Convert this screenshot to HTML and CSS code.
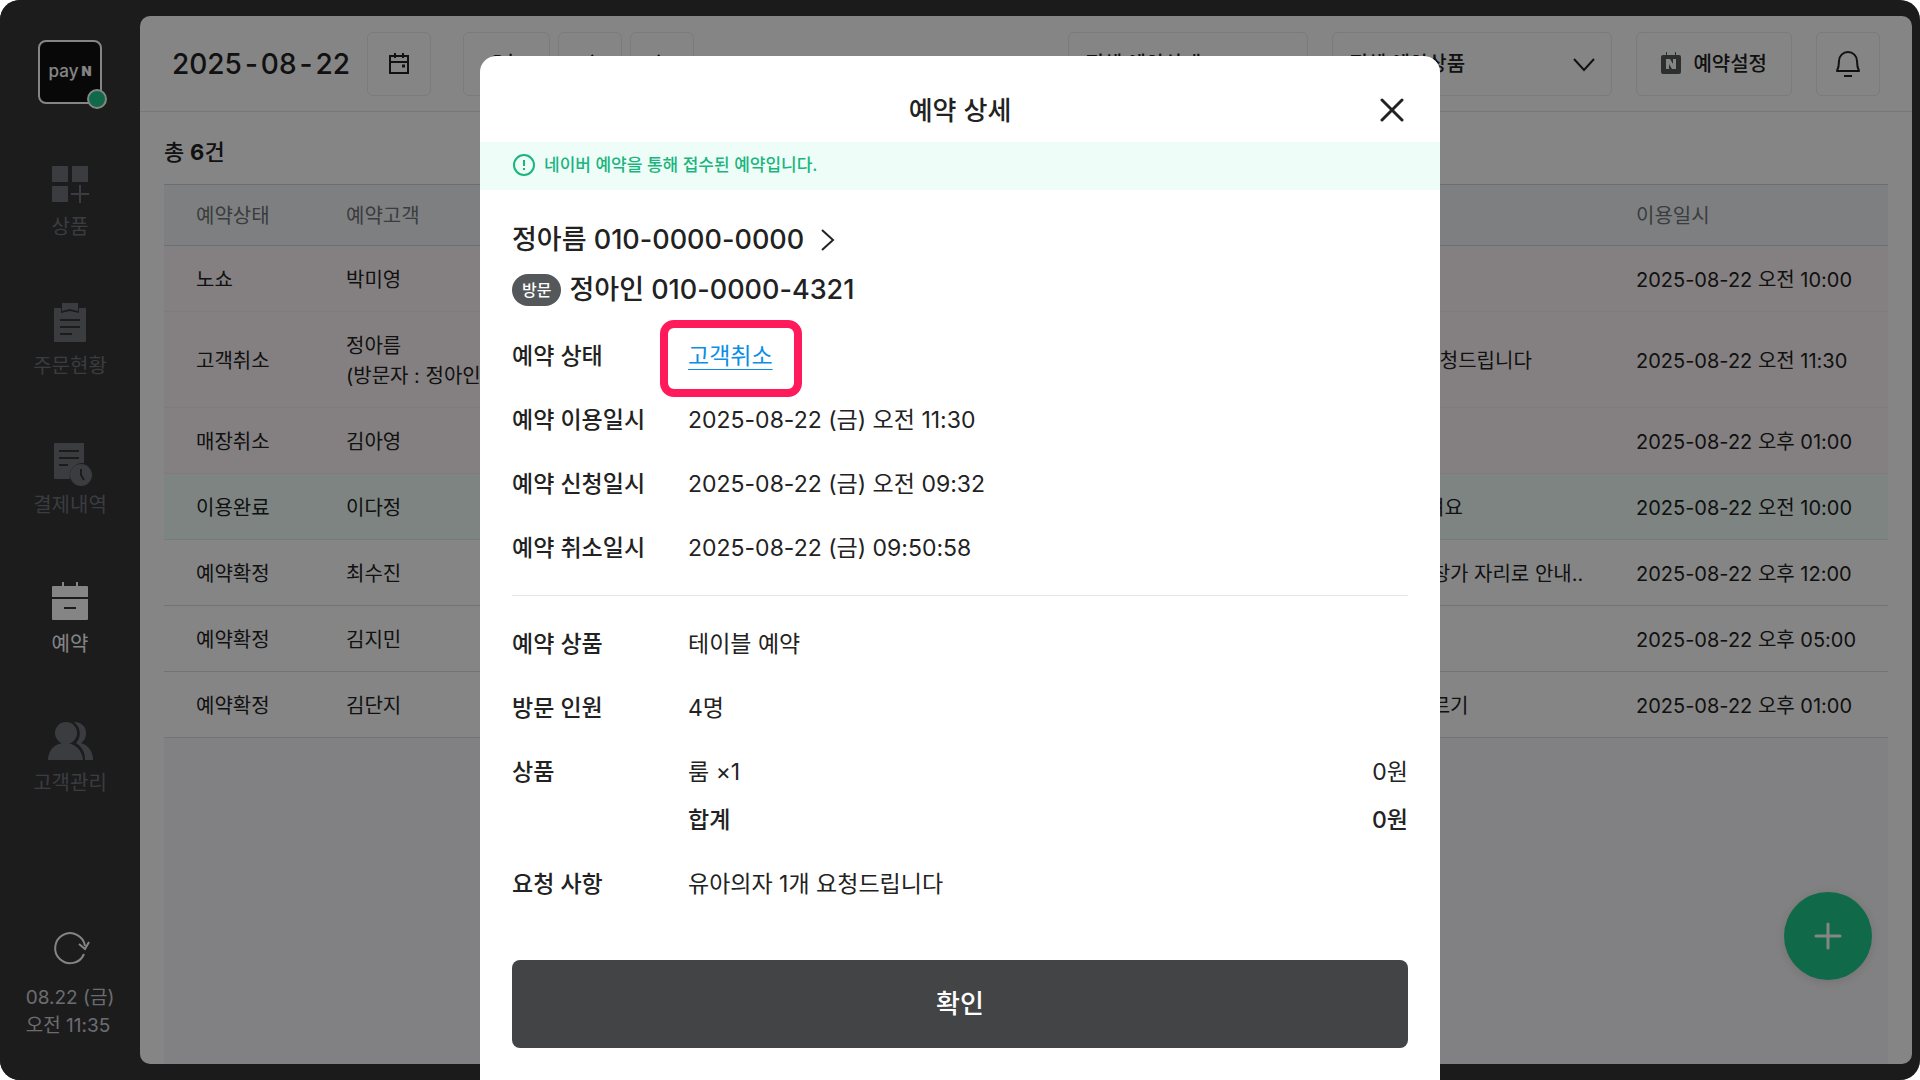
FILE: index.html
```html
<!DOCTYPE html>
<html lang="ko">
<head>
  <meta charset="UTF-8">
  <meta name="viewport" content="width=device-width, initial-scale=1.0">
  <link rel="stylesheet" href="styles.css">
  <title>예약 상세</title>
</head>
<body>
  <div class="app">
    <aside class="sidebar">
      <div class="logo">
        <span class="logo-pay">pay</span><span class="logo-n">N</span>
        <span class="logo-status"></span>
      </div>

      <nav class="menu">
        <a class="menu-item" href="#">
          <svg width="48" height="48" viewBox="0 0 48 48" fill="currentColor">
            <rect x="6" y="6" width="16" height="16" rx="1"/>
            <rect x="26" y="6" width="16" height="16" rx="1"/>
            <rect x="6" y="26" width="16" height="16" rx="1"/>
            <path d="M33 25h2v8h8v2h-8v8h-2v-8h-8v-2h8z"/>
          </svg>
          <span>상품</span>
        </a>
        <a class="menu-item" href="#">
          <svg width="48" height="48" viewBox="0 0 48 48">
            <path fill="currentColor" d="M9 9h6v5l9-2 9 2V9h6a1 1 0 0 1 1 1v32a1 1 0 0 1-1 1H9a1 1 0 0 1-1-1V10a1 1 0 0 1 1-1z"/>
            <path fill="currentColor" d="M16 4h16v8l-8-2-8 2z"/>
            <path class="cut" d="M14 21h20M14 28h20M14 35h12"/>
          </svg>
          <span>주문현황</span>
        </a>
        <a class="menu-item" href="#">
          <svg width="48" height="48" viewBox="0 0 48 48">
            <path fill="currentColor" d="M9 5h28a1 1 0 0 1 1 1v19a13 13 0 0 0-14 16H9a1 1 0 0 1-1-1V6a1 1 0 0 1 1-1z"/>
            <path class="cut" d="M13 13h20M13 20h20M13 27h9"/>
            <circle cx="35" cy="37" r="11" fill="currentColor"/>
            <path class="cut" d="M35 31v6l3 5"/>
          </svg>
          <span>결제내역</span>
        </a>
        <a class="menu-item active" href="#">
          <svg width="48" height="48" viewBox="0 0 48 48">
            <path fill="currentColor" d="M16 5h2v4h12V5h2v4h9a1 1 0 0 1 1 1v10H6V10a1 1 0 0 1 1-1h9z"/>
            <path fill="currentColor" d="M6 22h36v20a1 1 0 0 1-1 1H7a1 1 0 0 1-1-1z"/>
            <path class="cut" d="M18 31h12"/>
          </svg>
          <span>예약</span>
        </a>
        <a class="menu-item" href="#">
          <svg width="48" height="48" viewBox="0 0 48 48" fill="currentColor">
            <circle cx="20" cy="17" r="11"/>
            <path d="M2 44c0-10 7-17 17-17s17 7 18 17z"/>
            <path d="M28 6c7 0 12 4 12 11 0 5-2 8-5 10 7 2 12 8 12 17h-8c0-8-3-13-9-17 5-5 6-15-2-21z"/>
          </svg>
          <span>고객관리</span>
        </a>
      </nav>

      <div class="sync">
        <button class="icon-button" type="button" aria-label="새로고침">
          <svg width="40" height="40" viewBox="0 0 40 40" fill="none" stroke="currentColor" stroke-width="2">
            <path d="M34 26a15 15 0 1 1 1-8"/>
            <path d="M29 16l6 5 4-7"/>
          </svg>
        </button>
        <p class="clock">08.22 (금)<br>오전 11:35</p>
      </div>
    </aside>

    <main class="panel">
      <header class="toolbar">
        <h1 class="date"><span>2025</span><span>-</span><span>08</span><span>-</span><span>22</span></h1>
        <button class="box square" type="button" aria-label="날짜 선택">
          <svg width="24" height="24" viewBox="0 0 24 24" fill="none" stroke="currentColor" stroke-width="2">
            <path d="M3 4h18v17H3zM3 10h18M8 1v5M16 1v5"/>
            <path d="M15 14h3" stroke-width="3"/>
          </svg>
        </button>
        <div class="date-nav">
          <button class="box today" type="button">오늘</button>
          <button class="box square" type="button" aria-label="이전">
            <svg width="24" height="24" viewBox="0 0 24 24" fill="none" stroke="currentColor" stroke-width="2"><path d="M15 3l-8 9 8 9"/></svg>
          </button>
          <button class="box square" type="button" aria-label="다음">
            <svg width="24" height="24" viewBox="0 0 24 24" fill="none" stroke="currentColor" stroke-width="2"><path d="M8 3l8 9-8 9"/></svg>
          </button>
        </div>
        <div class="filters">
          <div class="select-wrap status">
            <select class="box" aria-label="예약상태"><option>전체 예약상태</option></select>
            <svg class="caret" width="24" height="24" viewBox="0 0 24 24" fill="none" stroke="currentColor" stroke-width="2"><path d="M2 7l10 11L22 7"/></svg>
          </div>
          <div class="select-wrap product">
            <select class="box" aria-label="예약상품"><option>전체 예약상품</option></select>
            <svg class="caret" width="24" height="24" viewBox="0 0 24 24" fill="none" stroke="currentColor" stroke-width="2"><path d="M2 7l10 11L22 7"/></svg>
          </div>
          <button class="box setting" type="button">
            <svg width="20" height="24" viewBox="0 0 20 24">
              <path fill="#555b58" d="M2 3h3V0h1v3h8V0h1v3h3a2 2 0 0 1 2 2v15a2 2 0 0 1-2 2H2a2 2 0 0 1-2-2V5a2 2 0 0 1 2-2z"/>
              <path fill="#fff" d="M5 7h4l3 5V7h3v10h-4l-3-5v5H5z"/>
            </svg>
            예약설정
          </button>
          <button class="box square" type="button" aria-label="알림">
            <svg width="28" height="32" viewBox="0 0 28 32" fill="none" stroke="currentColor" stroke-width="2">
              <path d="M3 23c2-4 2-7 2-10a9 9 0 0 1 18 0c0 3 0 6 2 10z" stroke-linejoin="round"/>
              <path d="M10 28h8"/>
            </svg>
          </button>
        </div>
      </header>

      <section class="list">
        <p class="total">총 <b>6</b>건</p>
        <div class="table-wrap">
          <table class="reservations">
            <colgroup>
              <col class="col-status"><col class="col-name"><col><col class="col-request"><col class="col-time">
            </colgroup>
            <thead>
              <tr><th>예약상태</th><th>예약고객</th><th>예약상품</th><th>요청사항</th><th>이용일시</th></tr>
            </thead>
            <tbody>
              <tr class="canceled"><td>노쇼</td><td>박미영</td><td></td><td></td><td>2025-08-22 오전 10:00</td></tr>
              <tr class="canceled tall"><td>고객취소</td><td>정아름<br>(방문자 : 정아인)</td><td></td><td>유아의자 1개 요청드립니다</td><td>2025-08-22 오전 11:30</td></tr>
              <tr class="canceled"><td>매장취소</td><td>김아영</td><td></td><td></td><td>2025-08-22 오후 01:00</td></tr>
              <tr class="done"><td>이용완료</td><td>이다정</td><td></td><td>창가석 부탁드려요</td><td>2025-08-22 오전 10:00</td></tr>
              <tr><td>예약확정</td><td>최수진</td><td></td><td>가능하시면 꼭 창가 자리로 안내..</td><td>2025-08-22 오후 12:00</td></tr>
              <tr><td>예약확정</td><td>김지민</td><td></td><td></td><td>2025-08-22 오후 05:00</td></tr>
              <tr><td>예약확정</td><td>김단지</td><td></td><td>아이 땅콩 알레르기</td><td>2025-08-22 오후 01:00</td></tr>
            </tbody>
          </table>
        </div>
      </section>

      <button class="fab" type="button" aria-label="예약 추가">
        <svg width="28" height="28" viewBox="0 0 28 28" fill="none" stroke="currentColor" stroke-width="3" stroke-linecap="round"><path d="M14 2v24M2 14h24"/></svg>
      </button>
    </main>

    <div class="dim">
      <div class="modal" role="dialog" aria-labelledby="modalTitle">
        <div class="modal-head">
          <h2 id="modalTitle">예약 상세</h2>
          <button class="icon-button close" type="button" aria-label="닫기">
            <svg width="24" height="24" viewBox="0 0 24 24" fill="none" stroke="currentColor" stroke-width="3" stroke-linecap="round"><path d="M2 2l20 20M22 2L2 22"/></svg>
          </button>
        </div>
        <p class="notice">
          <svg width="24" height="24" viewBox="0 0 24 24" fill="none" stroke="currentColor" stroke-width="2"><circle cx="12" cy="12" r="10"/><path d="M12 7v6M12 15v2"/></svg>
          네이버 예약을 통해 접수된 예약입니다.
        </p>

        <div class="modal-body">
          <a class="person" href="#">정아름 010-0000-0000
            <svg width="16" height="24" viewBox="0 0 16 24" fill="none" stroke="currentColor" stroke-width="2"><path d="M2 2l11 10L2 22"/></svg>
          </a>
          <p class="person visitor"><span class="badge">방문</span><span>정아인 010-0000-4321</span></p>

          <dl class="details">
            <dt>예약 상태</dt>
            <dd class="status-cell"><a href="#">고객취소</a><span class="marker"></span></dd>
            <dt>예약 이용일시</dt>
            <dd>2025-08-22 (금) 오전 11:30</dd>
            <dt>예약 신청일시</dt>
            <dd>2025-08-22 (금) 오전 09:32</dd>
            <dt>예약 취소일시</dt>
            <dd>2025-08-22 (금) 09:50:58</dd>
          </dl>
          <dl class="details">
            <dt>예약 상품</dt>
            <dd>테이블 예약</dd>
            <dt>방문 인원</dt>
            <dd>4명</dd>
            <dt>상품</dt>
            <dd class="prices">
              <div class="price"><span>룸 ×1</span><span>0원</span></div>
              <div class="price sum"><span>합계</span><span>0원</span></div>
            </dd>
            <dt>요청 사항</dt>
            <dd>유아의자 1개 요청드립니다</dd>
          </dl>

          <button class="confirm" type="button">확인</button>
        </div>
      </div>
    </div>
  </div>
</body>
</html>
```
FILE: styles.css
```css
* {
  box-sizing: border-box;
}

body {
  margin: 0;
  background: #fff;
  color: #222;
  font-family: Inter, "Noto Sans CJK KR", sans-serif;
  font-size: 20px;
  line-height: 28px;
}

h1, h2, p, dl, dd {
  margin: 0;
}

a {
  color: inherit;
  text-decoration: none;
}

button, select {
  font: inherit;
  color: inherit;
  cursor: pointer;
}

svg {
  display: block;
  flex: none;
}

.app {
  position: relative;
  display: flex;
  min-height: 100vh;
  padding: 16px 8px 16px 0;
  background: #353535;
  border-radius: 20px;
  overflow: hidden;
}

/* Sidebar */
.sidebar {
  display: flex;
  flex-direction: column;
  align-items: center;
  width: 140px;
  margin: -16px 0;
  padding: 40px 0;
  background: #363639;
  color: #70747a;
}

.logo {
  position: relative;
  display: flex;
  align-items: center;
  justify-content: center;
  gap: 3px;
  width: 64px;
  height: 64px;
  padding-bottom: 2px;
  border: 2px solid #fff;
  border-radius: 8px;
  background: #111;
  color: #fff;
  line-height: 20px;
}

.logo-pay {
  font-size: 17px;
  font-weight: 500;
}

.logo-n {
  font-size: 13px;
  font-weight: 900;
}

.logo-status {
  position: absolute;
  right: -7px;
  bottom: -7px;
  width: 20px;
  height: 20px;
  border: 2px solid #fff;
  border-radius: 50%;
  background: #1fcc8c;
}

.menu {
  display: flex;
  flex-direction: column;
  gap: 58px;
  margin-top: 56px;
}

.menu-item {
  display: flex;
  flex-direction: column;
  align-items: center;
  gap: 5px;
}

.menu-item.active {
  color: #fff;
}

.cut {
  fill: none;
  stroke: #363639;
  stroke-width: 2;
}

.sync {
  display: flex;
  flex-direction: column;
  align-items: center;
  gap: 16px;
  margin-top: auto;
  color: #fff;
}

.icon-button {
  padding: 0;
  border: 0;
  background: none;
}

.clock {
  color: #d0d0d4;
  font-size: 19px;
}

/* Main panel */
.panel {
  position: relative;
  display: flex;
  flex: 1;
  flex-direction: column;
  min-width: 0;
  border-radius: 10px;
  background: #fff;
  overflow: hidden;
}

.toolbar {
  display: flex;
  align-items: center;
  height: 96px;
  padding: 0 32px;
  border-bottom: 1px solid #e4e5e9;
}

.date {
  display: flex;
  gap: 3px;
  margin-right: 17px;
  font-size: 28px;
  font-weight: 500;
}

.box {
  display: flex;
  align-items: center;
  justify-content: center;
  height: 64px;
  padding: 0 24px;
  border: 1px solid #ebebef;
  border-radius: 6px;
  background: #fff;
  font-weight: 500;
}

.square {
  width: 64px;
  padding: 0;
}

.date-nav {
  display: flex;
  gap: 8px;
  margin-left: 32px;
}

.filters {
  display: flex;
  gap: 24px;
  margin-left: auto;
}

.select-wrap {
  position: relative;
}

.select-wrap.status {
  width: 240px;
}

.select-wrap.product {
  width: 280px;
}

.select-wrap select {
  width: 100%;
  padding: 0 16px;
  appearance: none;
}

.caret {
  position: absolute;
  top: 20px;
  right: 16px;
  pointer-events: none;
}

.setting {
  gap: 12px;
}

.list {
  display: flex;
  flex: 1;
  flex-direction: column;
  padding: 26px 24px 0;
}

.total {
  font-size: 22px;
  font-weight: 500;
}

.table-wrap {
  flex: 1;
  margin-top: 18px;
  background: #f8f8fb;
}

.reservations {
  width: 100%;
  border-collapse: separate;
  border-spacing: 0;
  table-layout: fixed;
}

.reservations th,
.reservations td {
  height: 66px;
  padding: 2px 0 0 32px;
  border-bottom: 1px solid #dcdde2;
  background: #fff;
  text-align: left;
  white-space: nowrap;
}

.reservations th {
  height: 62px;
  border-top: 1px solid #d0d3d8;
  border-color: #d0d3d8;
  background: #f2f4f7;
  color: #70747a;
  font-weight: 400;
}

.reservations .canceled td {
  background: #fdf6f7;
  border-color: #f2eced;
}

.reservations .tall td {
  height: 96px;
  line-height: 30px;
}

.reservations .done td {
  background: #f0fdf8;
  border-color: #e4eeea;
}

.col-status {
  width: 150px;
}

.col-name {
  width: 260px;
}

.col-request {
  width: 326px;
}

.col-time {
  width: 284px;
}

.fab {
  position: absolute;
  right: 40px;
  bottom: 84px;
  display: flex;
  align-items: center;
  justify-content: center;
  width: 88px;
  height: 88px;
  border: 0;
  border-radius: 50%;
  background: #1fcc8c;
  box-shadow: 0 2px 12px rgba(0, 0, 0, 0.12);
  color: #fff;
}

/* Reservation detail */
.dim {
  position: absolute;
  inset: 0;
  display: flex;
  justify-content: center;
  padding-top: 56px;
  background: rgba(0, 0, 0, 0.48);
}

.modal {
  width: 50%;
  min-width: 720px;
  border-radius: 16px 16px 0 0;
  background: #fff;
  overflow: hidden;
}

.modal-head {
  position: relative;
  display: flex;
  align-items: center;
  justify-content: center;
  height: 86px;
  padding-top: 24px;
}

.modal-head h2 {
  font-size: 26px;
  font-weight: 500;
  line-height: 36px;
}

.close {
  position: absolute;
  right: 36px;
  bottom: 20px;
}

.notice {
  display: flex;
  align-items: center;
  gap: 8px;
  height: 48px;
  padding: 0 32px 2px;
  background: #effdf9;
  color: #1bb57e;
  font-size: 17px;
  font-weight: 500;
}

.modal-body {
  padding: 32px;
}

.person {
  display: flex;
  align-items: center;
  gap: 16px;
  margin-bottom: 14px;
  font-size: 27px;
  font-weight: 500;
  line-height: 36px;
}

.visitor {
  gap: 8px;
}

.badge {
  padding: 0 10px;
  border-radius: 16px;
  background: #54585b;
  color: #fff;
  font-size: 16px;
  line-height: 32px;
}

.details {
  display: grid;
  grid-template-columns: 176px 1fr;
  row-gap: 32px;
  padding: 32px 0;
  font-size: 23px;
  line-height: 32px;
}

.person + .details {
  padding-top: 18px;
  padding-bottom: 31px;
  border-bottom: 1px solid #e6e6e8;
}

.details dt {
  font-weight: 500;
}

.status-cell {
  position: relative;
}

.status-cell a {
  color: #0a8ee6;
  text-decoration: underline;
  text-decoration-thickness: 1px;
  text-underline-offset: 5px;
}

.marker {
  position: absolute;
  top: -20px;
  left: -28px;
  width: 142px;
  height: 77px;
  border: 8px solid #ff1a5b;
  border-radius: 14px;
  pointer-events: none;
}

.price {
  display: flex;
  justify-content: space-between;
}

.sum {
  margin-top: 16px;
  font-weight: 500;
}

.confirm {
  width: 100%;
  height: 88px;
  margin-top: 28px;
  border: 0;
  border-radius: 8px;
  background: #434446;
  color: #fff;
  font-size: 26px;
  font-weight: 500;
}
```
